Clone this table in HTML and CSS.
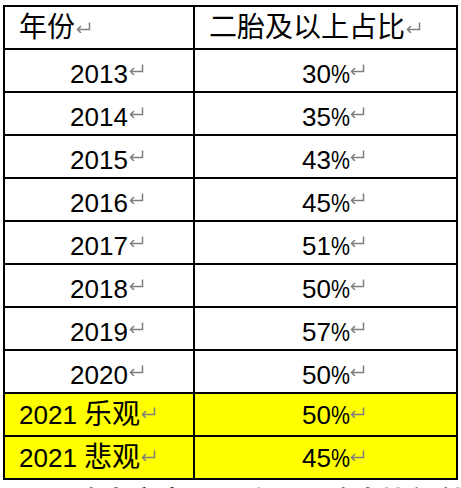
FILE: index.html
```html
<!DOCTYPE html>
<html lang="zh">
<head>
<meta charset="utf-8">
<link rel="stylesheet" href="styles.css">
</head>
<body>
<table class="grid">
  <tr class="head">
    <td class="c1 left"><span class="zh">年份</span><span class="mk"><svg width="17" height="11" viewBox="0 0 17 11"><path d="M14.5 0.5V7.5H2.5M6 4L2.5 7.5L6 11" fill="none" stroke="#7f7f7f" stroke-width="1.5"/></svg></span></td>
    <td class="c2 left"><span class="zh">二胎及以上占比</span><span class="mk"><svg width="17" height="11" viewBox="0 0 17 11"><path d="M14.5 0.5V7.5H2.5M6 4L2.5 7.5L6 11" fill="none" stroke="#7f7f7f" stroke-width="1.5"/></svg></span></td>
  </tr>
  <tr class="num"><td class="c1">2013<span class="mk"><svg width="17" height="11" viewBox="0 0 17 11"><path d="M14.5 0.5V7.5H2.5M6 4L2.5 7.5L6 11" fill="none" stroke="#7f7f7f" stroke-width="1.5"/></svg></span></td><td class="c2">30<span class="pct">%</span><span class="mk"><svg width="17" height="11" viewBox="0 0 17 11"><path d="M14.5 0.5V7.5H2.5M6 4L2.5 7.5L6 11" fill="none" stroke="#7f7f7f" stroke-width="1.5"/></svg></span></td></tr>
  <tr class="num"><td class="c1">2014<span class="mk"><svg width="17" height="11" viewBox="0 0 17 11"><path d="M14.5 0.5V7.5H2.5M6 4L2.5 7.5L6 11" fill="none" stroke="#7f7f7f" stroke-width="1.5"/></svg></span></td><td class="c2">35<span class="pct">%</span><span class="mk"><svg width="17" height="11" viewBox="0 0 17 11"><path d="M14.5 0.5V7.5H2.5M6 4L2.5 7.5L6 11" fill="none" stroke="#7f7f7f" stroke-width="1.5"/></svg></span></td></tr>
  <tr class="num"><td class="c1">2015<span class="mk"><svg width="17" height="11" viewBox="0 0 17 11"><path d="M14.5 0.5V7.5H2.5M6 4L2.5 7.5L6 11" fill="none" stroke="#7f7f7f" stroke-width="1.5"/></svg></span></td><td class="c2">43<span class="pct">%</span><span class="mk"><svg width="17" height="11" viewBox="0 0 17 11"><path d="M14.5 0.5V7.5H2.5M6 4L2.5 7.5L6 11" fill="none" stroke="#7f7f7f" stroke-width="1.5"/></svg></span></td></tr>
  <tr class="num"><td class="c1">2016<span class="mk"><svg width="17" height="11" viewBox="0 0 17 11"><path d="M14.5 0.5V7.5H2.5M6 4L2.5 7.5L6 11" fill="none" stroke="#7f7f7f" stroke-width="1.5"/></svg></span></td><td class="c2">45<span class="pct">%</span><span class="mk"><svg width="17" height="11" viewBox="0 0 17 11"><path d="M14.5 0.5V7.5H2.5M6 4L2.5 7.5L6 11" fill="none" stroke="#7f7f7f" stroke-width="1.5"/></svg></span></td></tr>
  <tr class="num"><td class="c1">2017<span class="mk"><svg width="17" height="11" viewBox="0 0 17 11"><path d="M14.5 0.5V7.5H2.5M6 4L2.5 7.5L6 11" fill="none" stroke="#7f7f7f" stroke-width="1.5"/></svg></span></td><td class="c2">51<span class="pct">%</span><span class="mk"><svg width="17" height="11" viewBox="0 0 17 11"><path d="M14.5 0.5V7.5H2.5M6 4L2.5 7.5L6 11" fill="none" stroke="#7f7f7f" stroke-width="1.5"/></svg></span></td></tr>
  <tr class="num"><td class="c1">2018<span class="mk"><svg width="17" height="11" viewBox="0 0 17 11"><path d="M14.5 0.5V7.5H2.5M6 4L2.5 7.5L6 11" fill="none" stroke="#7f7f7f" stroke-width="1.5"/></svg></span></td><td class="c2">50<span class="pct">%</span><span class="mk"><svg width="17" height="11" viewBox="0 0 17 11"><path d="M14.5 0.5V7.5H2.5M6 4L2.5 7.5L6 11" fill="none" stroke="#7f7f7f" stroke-width="1.5"/></svg></span></td></tr>
  <tr class="num"><td class="c1">2019<span class="mk"><svg width="17" height="11" viewBox="0 0 17 11"><path d="M14.5 0.5V7.5H2.5M6 4L2.5 7.5L6 11" fill="none" stroke="#7f7f7f" stroke-width="1.5"/></svg></span></td><td class="c2">57<span class="pct">%</span><span class="mk"><svg width="17" height="11" viewBox="0 0 17 11"><path d="M14.5 0.5V7.5H2.5M6 4L2.5 7.5L6 11" fill="none" stroke="#7f7f7f" stroke-width="1.5"/></svg></span></td></tr>
  <tr class="num"><td class="c1">2020<span class="mk"><svg width="17" height="11" viewBox="0 0 17 11"><path d="M14.5 0.5V7.5H2.5M6 4L2.5 7.5L6 11" fill="none" stroke="#7f7f7f" stroke-width="1.5"/></svg></span></td><td class="c2">50<span class="pct">%</span><span class="mk"><svg width="17" height="11" viewBox="0 0 17 11"><path d="M14.5 0.5V7.5H2.5M6 4L2.5 7.5L6 11" fill="none" stroke="#7f7f7f" stroke-width="1.5"/></svg></span></td></tr>
  <tr class="hl"><td class="c1 left">2021 <span class="zh">乐观</span><span class="mk"><svg width="17" height="11" viewBox="0 0 17 11"><path d="M14.5 0.5V7.5H2.5M6 4L2.5 7.5L6 11" fill="none" stroke="#7f7f7f" stroke-width="1.5"/></svg></span></td><td class="c2">50<span class="pct">%</span><span class="mk"><svg width="17" height="11" viewBox="0 0 17 11"><path d="M14.5 0.5V7.5H2.5M6 4L2.5 7.5L6 11" fill="none" stroke="#7f7f7f" stroke-width="1.5"/></svg></span></td></tr>
  <tr class="hl"><td class="c1 left">2021 <span class="zh">悲观</span><span class="mk"><svg width="17" height="11" viewBox="0 0 17 11"><path d="M14.5 0.5V7.5H2.5M6 4L2.5 7.5L6 11" fill="none" stroke="#7f7f7f" stroke-width="1.5"/></svg></span></td><td class="c2">45<span class="pct">%</span><span class="mk"><svg width="17" height="11" viewBox="0 0 17 11"><path d="M14.5 0.5V7.5H2.5M6 4L2.5 7.5L6 11" fill="none" stroke="#7f7f7f" stroke-width="1.5"/></svg></span></td></tr>
</table>
<p class="note">一胎生育意愿下降，二胎占比仍然较高</p>
</body>
</html>
```

FILE: styles.css
```css
html, body {
  margin: 0;
  padding: 0;
  background: #ffffff;
  overflow: hidden;
}

body {
  width: 461px;
  height: 488px;
  font-family: "Liberation Sans", "Noto Sans CJK SC", sans-serif;
  color: #000000;
}

.grid {
  margin: 5px 0 0 3px;
  border-collapse: separate;
  border-spacing: 0;
  border-top: 2px solid #000;
  border-left: 2px solid #000;
  table-layout: fixed;
}

.grid td {
  box-sizing: border-box;
  height: 43px;
  border-right: 2px solid #000;
  border-bottom: 2px solid #000;
  font-size: 26px;
  line-height: 26px;
  vertical-align: baseline;
  text-align: center;
  white-space: nowrap;
  padding: 0;
}

.grid .c1 { width: 190px; }
.grid .c2 { width: 263px; }

.grid td.left { text-align: left; }
.grid .c1.left { padding-left: 14px; }
.grid .c2.left { padding-left: 14px; }

.head td { padding-top: 5px; }
.num td { padding-top: 11px; }
.hl td { padding-top: 5px; background: #ffff00; }

.zh {
  font-family: "Noto Sans CJK SC", sans-serif;
  font-size: 28px;
  line-height: 26px;
}

.pct {
  display: inline-block;
  transform: scaleX(0.82);
  transform-origin: left center;
  margin-right: -5px;
}

.mk {
  display: inline-block;
  width: 0;
  overflow: visible;
  vertical-align: baseline;
}

.mk svg {
  display: block;
  margin-left: 0;
  position: relative;
  top: -8px;
}

.head .mk svg { top: -4px; }
.hl .mk svg { top: -6px; }

.note {
  margin: 6px 0 0 46px;
  font-family: "Noto Sans CJK SC", sans-serif;
  font-weight: 700;
  font-size: 28px;
  line-height: 28px;
  white-space: nowrap;
}
```
